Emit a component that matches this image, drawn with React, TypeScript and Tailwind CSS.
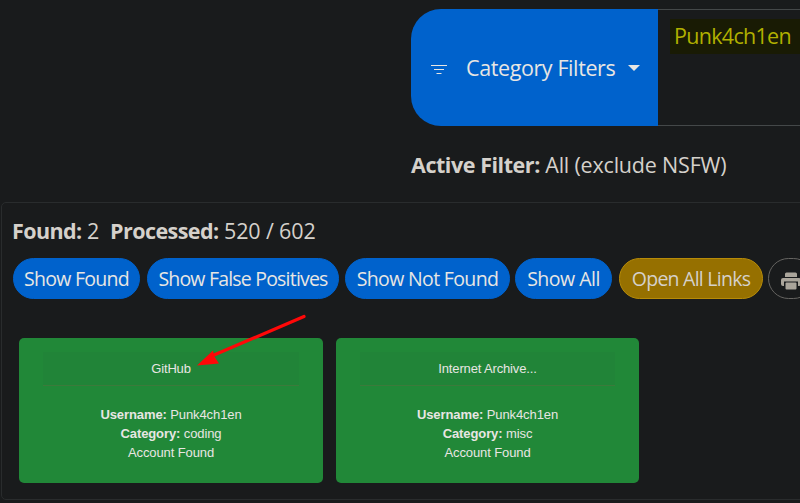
import type { ReactNode } from "react";

function PillButton({ className, children }: { className: string; children: ReactNode }) {
  return (
    <button className={`h-[41px] shrink-0 whitespace-nowrap rounded-full border pt-px text-[19.5px] ${className}`}>
      {children}
    </button>
  );
}

function ResultCard({ site, category, className }: { site: string; category: string; className: string }) {
  return (
    <article
      className={`h-[145px] rounded-[5px] bg-[#218838] px-6 pt-[14px] text-center font-['Liberation_Sans',Arial,sans-serif] text-[13px] leading-[19.2px] tracking-[-0.1px] text-[#e8e6e3] ${className}`}
    >
      <h2 className="h-[34px] border-b border-[#3c7a3b] bg-[#218438] pt-[7px] tracking-[-0.15px]">{site}</h2>
      <div className="pt-[19px]">
        <p><b>Username:</b> Punk4ch1en</p>
        <p><b>Category:</b> {category}</p>
        <p>Account Found</p>
      </div>
    </article>
  );
}

export default function App() {
  return (
    <main className="relative h-[503px] w-[800px] overflow-hidden bg-[#191b1c] pt-[9px] font-['Open_Sans','Noto_Sans',sans-serif] text-[#d5d1cb]">
      <div className="ml-[411px] flex h-[117px]">
        <button className="flex w-[247px] shrink-0 items-center rounded-l-[30px] bg-[#0062cc] pl-5 text-[21.5px] text-[#e8e6e3]">
          <svg className="mt-[3px] h-[11px] w-4 shrink-0" viewBox="0 0 16 11" fill="none" stroke="currentColor">
            <path d="M0 1.5h16M3 5.5h10M5.5 9.5h5" />
          </svg>
          <span className="ml-[19px] mt-px w-[151px] whitespace-nowrap text-left tracking-[-0.4px]">Category Filters</span>
          <svg className="ml-[11px] h-[6px] w-3 shrink-0" viewBox="0 0 12 6" fill="currentColor">
            <path d="M0 0h12L6 6Z" />
          </svg>
        </button>
        <div className="flex-1 border-y border-[#444849] pl-3 pt-[9px]">
          <span className="block h-[35px] bg-[#191b04] pl-1 text-[21.5px] leading-[33px] tracking-[-0.7px] text-[#b1b000]">
            Punk4ch1en
          </span>
        </div>
      </div>
      <p className="ml-[411px] mt-[24px] h-[30px] whitespace-nowrap text-[21.5px] leading-[30px] tracking-[-0.2px]">
        <b className="tracking-[-0.45px]">Active Filter:</b> All (exclude NSFW)
      </p>
      <section className="ml-px mt-[22px] h-[298px] w-[820px] rounded-[5px] border border-[#292c2d] pl-[11px] pt-[13px]">
        <p className="-ml-px h-[30px] whitespace-pre text-[21.5px] leading-[30px] tracking-[-0.15px]">
          <b className="tracking-[-0.6px]">Found:</b> 2  <b className="tracking-[-0.55px]">Processed:</b> 520 / 602
        </p>
        <div className="mt-[12px] flex">
          <PillButton className="w-[127px] border-[#0062cc] bg-[#0062cc] tracking-[-0.7px] text-[#e8e6e3]">Show Found</PillButton>
          <PillButton className="ml-[7px] w-[192px] border-[#0062cc] bg-[#0062cc] tracking-[-0.8px] text-[#e8e6e3]">Show False Positives</PillButton>
          <PillButton className="ml-[6px] w-[165px] border-[#0062cc] bg-[#0062cc] tracking-[-0.65px] text-[#e8e6e3]">Show Not Found</PillButton>
          <PillButton className="ml-[5px] w-[97px] border-[#0062cc] bg-[#0062cc] tracking-[-0.5px] text-[#e8e6e3]">Show All</PillButton>
          <PillButton className="ml-[7px] w-[144px] border-[#b78b08] bg-[#967000] tracking-[-0.75px] text-[#d5d1cb]">Open All Links</PillButton>
          <PillButton className="ml-[5px] w-[46px] border-[#656461] pl-[12px] text-[#aaa59b]">
            <svg className="mt-[3px] h-[18px] w-5" viewBox="0 0 20 18" fill="currentColor">
              <path d="M5.5.5h9A1.5 1.5 0 0 1 16 2v3H4V2A1.5 1.5 0 0 1 5.500.5Z" />
              <path d="M2 6h16a2 2 0 0 1 2 2v4a2 2 0 0 1-2 2h-1v-4.500H3V14H2a2 2 0 0 1-2-2V8a2 2 0 0 1 2-2Z" />
              <path d="M5.500 10.500h9a1 1 0 0 1 1 1v5a1 1 0 0 1-1 1h-9a1 1 0 0 1-1-1v-5a1 1 0 0 1 1-1Z" />
            </svg>
          </PillButton>
        </div>
        <div className="ml-[6px] mt-[39px] flex gap-[13px]">
          <ResultCard className="w-[304px]" site="GitHub" category="coding" />
          <ResultCard className="w-[303px]" site="Internet Archive..." category="misc" />
        </div>
      </section>
      <svg className="absolute left-[196px] top-[313px] h-[56px] w-[112px]" viewBox="196 313 112 56">
        <path d="M304 316.500 214 355" stroke="#ff0808" strokeWidth="3.200" strokeLinecap="round" />
        <path d="M197 365.500 213 350.500 214 356 219 363.500Z" fill="#ff0808" />
      </svg>
    </main>
  );
}
